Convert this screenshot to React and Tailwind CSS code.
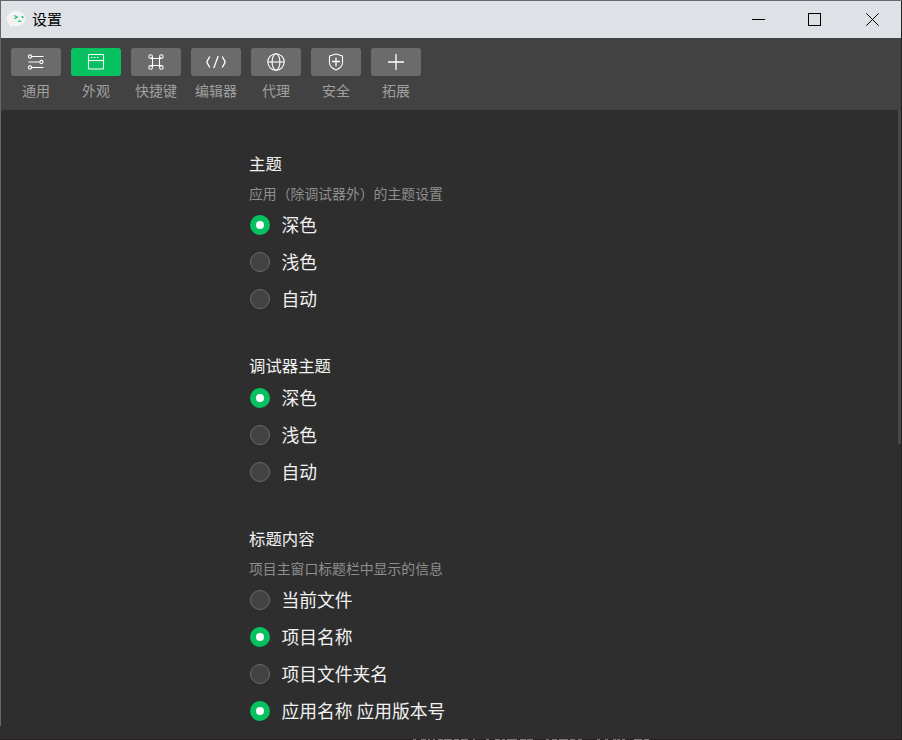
import React from "react";

const Icon = ({ children, size = 20 }) => (
  <svg width={size} height={size} viewBox="0 0 20 20" fill="none" stroke="#ffffff" strokeWidth="1.1">
    {children}
  </svg>
);

const tabs = [
  {
    label: "通用",
    icon: (
      <Icon>
        <path d="M6 4.5h11.5M2.5 10h11M6 15.5h11.5" />
        <circle cx="4" cy="4.5" r="1.6" />
        <circle cx="15.4" cy="10" r="1.6" />
        <circle cx="4" cy="15.5" r="1.6" />
      </Icon>
    ),
  },
  {
    label: "外观",
    active: true,
    icon: (
      <Icon>
        <rect x="2.5" y="2.5" width="15" height="14.5" rx="0.6" />
        <path d="M2.5 8.5h15" />
        <path d="M5 5.5h1.4M8 5.5h1.4M11 5.5h1.4" />
      </Icon>
    ),
  },
  {
    label: "快捷键",
    icon: (
      <Icon>
        <path d="M6.5 5v10M13.5 5v10M5 6.5h10M5 13.5h10" />
        <circle cx="4.6" cy="4.6" r="1.8" />
        <circle cx="15.4" cy="4.6" r="1.8" />
        <circle cx="4.6" cy="15.4" r="1.8" />
        <circle cx="15.4" cy="15.4" r="1.8" />
      </Icon>
    ),
  },
  {
    label: "编辑器",
    icon: (
      <Icon>
        <path d="M3.8 4.5 1.300 8.800q-.6 1.200 0 2.400L3.800 15.500M16.200 4.500l2.500 4.300q.6 1.200 0 2.400l-2.500 4.300M12.200 4 7.800 16" strokeWidth="1.300" />
      </Icon>
    ),
  },
  {
    label: "代理",
    icon: (
      <Icon>
        <circle cx="10" cy="10" r="8.200" />
        <ellipse cx="10" cy="10" rx="3.9" ry="8.200" />
        <path d="M2 10h16" />
      </Icon>
    ),
  },
  {
    label: "安全",
    icon: (
      <Icon>
        <path d="M10 2 16.500 4v6.500c0 3.300-2.600 5.800-6.500 7.500-3.900-1.700-6.500-4.200-6.500-7.500V4z" strokeLinejoin="round" />
        <path d="M10 5.500v9M6 9.500h8" strokeWidth="1.300" />
      </Icon>
    ),
  },
  {
    label: "拓展",
    icon: (
      <Icon>
        <path d="M10 2v16M2 10h16" strokeWidth="1.300" />
      </Icon>
    ),
  },
];

const sections = [
  {
    title: "主题",
    desc: "应用（除调试器外）的主题设置",
    options: [["深色", true], ["浅色", false], ["自动", false]],
  },
  {
    title: "调试器主题",
    options: [["深色", true], ["浅色", false], ["自动", false]],
  },
  {
    title: "标题内容",
    desc: "项目主窗口标题栏中显示的信息",
    options: [
      ["当前文件", false],
      ["项目名称", true],
      ["项目文件夹名", false],
      ["应用名称 应用版本号", true],
    ],
  },
];

function TitleBar() {
  return (
    <header className="flex h-[37px] shrink-0 items-center bg-[#dee1e6] pl-[5px] text-black">
      <svg width="20" height="19" viewBox="0 0 20 19" className="shrink-0">
        <path d="M10 1C4.800 1 .5 4 .5 8.500c0 2.700 1.400 4.800 3.500 6.200L3.500 17.500l3-1.700c1 .3 2.300.4 3.600.4 5.100 0 9.300-3.200 9.300-7.700S15.200 1 10 1z" fill="#f3f3f3" />
        <path d="M8.300 5.500 11.300 7.200 8.300 8.800" fill="none" stroke="#1fc56c" strokeWidth="1.300" />
        <path d="M12 11.200h3.300" stroke="#1fc56c" strokeWidth="1.300" />
        <circle cx="16.500" cy="7.200" r="1.100" fill="#1fc56c" />
      </svg>
      <span className="mb-0.5 ml-[6px] text-[15px] leading-5">设置</span>
      <div className="ml-auto flex items-center pr-[22px]">
        <svg width="13" height="13" viewBox="0 0 13 13" stroke="black">
          <path d="M0 6.500h13" />
        </svg>
        <svg width="13" height="13" viewBox="0 0 13 13" fill="none" stroke="black" className="ml-[43px]">
          <rect x="0.500" y="0.500" width="12" height="12" />
        </svg>
        <svg width="13" height="13" viewBox="0 0 13 13" stroke="black" className="ml-[45px]">
          <path d="M0.300 0.300l12.400 12.400M12.700 0.300.3 12.700" />
        </svg>
      </div>
    </header>
  );
}

function Toolbar() {
  return (
    <nav className="flex h-[72px] shrink-0 gap-2.5 bg-[#424242] pl-2.5 pt-2.5">
      {tabs.map((t) => (
        <div key={t.label} className="flex w-[50px] flex-col items-center">
          <div className={`flex h-7 w-[50px] items-center justify-center rounded-[3px] ${t.active ? "bg-[#07c160]" : "bg-[#6b6b6b]"}`}>
            {t.icon}
          </div>
          <span className="mt-1 whitespace-nowrap text-[14px] leading-5 text-[#a0a0a0]">{t.label}</span>
        </div>
      ))}
    </nav>
  );
}

function Option({ label, checked }) {
  return (
    <div className="mb-px flex h-9 items-center">
      {checked ? (
        <span className="ml-px flex size-5 items-center justify-center rounded-full bg-[#07c160]">
          <span className="size-2 rounded-full bg-white" />
        </span>
      ) : (
        <span className="ml-px size-5 rounded-full border border-[#6b6b6b] bg-[#424242]" />
      )}
      <span className="mb-0.5 ml-[11.500px] whitespace-pre text-[17.750px] leading-6 text-[#f2f2f2]">{label}</span>
    </div>
  );
}

const fragments = [[13, 3], [21, 5], [28, 2], [33, 2], [38, 5], [44, 8], [54, 5], [61, 7], [73, 2], [86, 3], [95, 5], [102, 3], [107, 10], [120, 6], [127, 6], [146, 3], [152, 5], [159, 9], [170, 5], [178, 4], [197, 3], [205, 3], [213, 3], [217, 3], [222, 3], [234, 8], [244, 5]];

export default function App() {
  return (
    <div className="flex h-[740px] w-[902px] flex-col overflow-hidden bg-[#2e2e2e] font-['Noto_Sans_CJK_SC','Liberation_Sans',sans-serif]">
      <div className="h-px shrink-0 bg-[#66686b]" />
      <div className="flex min-h-0 flex-1">
        <div className="h-[725px] w-px shrink-0 bg-[#666666]" />
        <div className="flex min-w-0 flex-1 flex-col">
          <TitleBar />
          <Toolbar />
          <main className="flex min-h-0 flex-1 justify-between overflow-hidden">
            <div className="flex flex-col gap-[34px] pl-[248px] pt-10">
              {sections.map((s) => (
                <section key={s.title}>
                  <h2 className="h-7 text-[16.400px] leading-[26px] text-[#f2f2f2]">{s.title}</h2>
                  {s.desc && <p className="h-[29px] text-[13.850px] leading-[30px] text-[#8f8f8f]">{s.desc}</p>}
                  {s.options.map(([label, checked]) => (
                    <Option key={label} label={label} checked={checked} />
                  ))}
                </section>
              ))}
            </div>
            <div className="h-[334px] w-[3px] shrink-0 bg-[#494949]" />
          </main>
        </div>
        <div className="w-px shrink-0 bg-[#222222]" />
      </div>
      <svg width="902" height="1" viewBox="0 0 902 1" className="shrink-0 bg-[#231f20]">
        {fragments.map(([x, w]) => (
          <rect key={x} x={400 + x} y="0" width={w} height="1" fill="#7a7678" />
        ))}
      </svg>
    </div>
  );
}
